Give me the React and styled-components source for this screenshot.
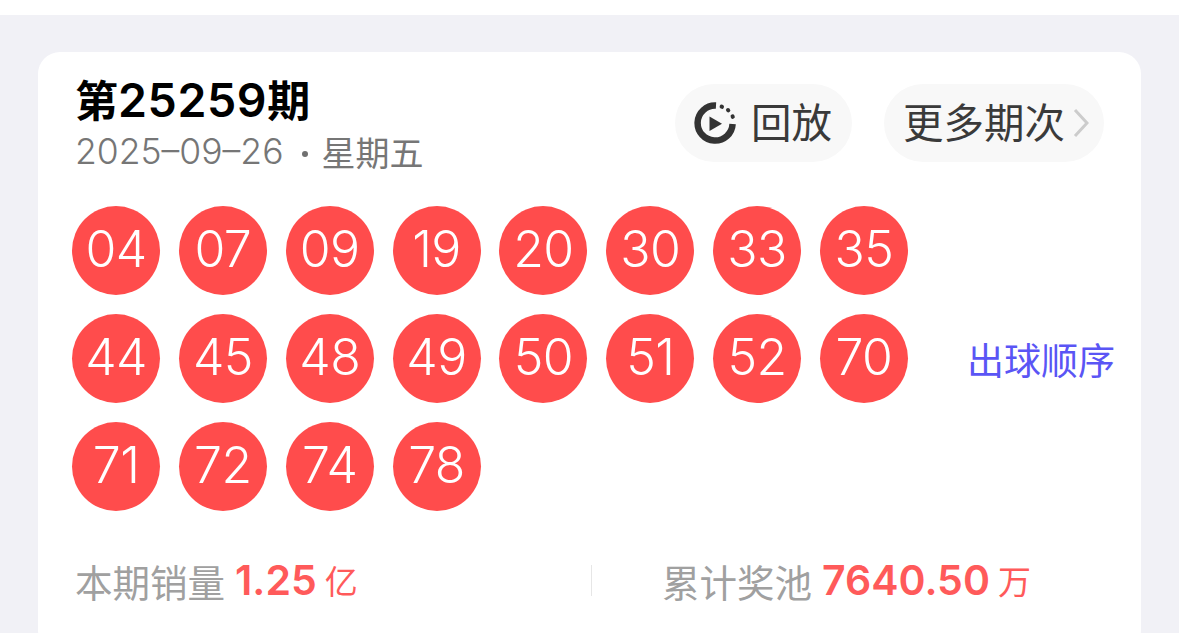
import React from "react"
import styled, { createGlobalStyle } from "styled-components"

const balls = [
    "04", "07", "09", "19", "20", "30", "33", "35",
    "44", "45", "48", "49", "50", "51", "52", "70",
    "71", "72", "74", "78",
]

const CJK = `"Noto Sans CJK SC", sans-serif`
const LATIN = `Inter, "Noto Sans CJK SC", sans-serif`

const Replay = () => (
    <svg width="42" height="42" viewBox="0 0 42 42">
        <path d="M22 3.6 A17.5 17.5 0 1 0 38.6 22" fill="none" stroke="#333" strokeWidth="6.5" />
        <path d="M27.6 4.6l.4.2M34 8l.3.3M38.6 14.4l.2.4" fill="none" stroke="#333" strokeWidth="4" strokeLinecap="round" />
        <path d="M15.5 14.5v14.5l12.5-7.3z" fill="#333" />
    </svg>
)

const App = () => {
    return (
        <Page>
            <GlobalStyle />
            <Card>
                <Header>
                    <div>
                        <Title>第<Digits>25259</Digits>期</Title>
                        <DateLine>
                            <DateNum>2025–09–26</DateNum>
                            <Dot />
                            星期五
                        </DateLine>
                    </div>
                    <Actions>
                        <Pill $wide={false}>
                            <Replay />
                            <PillLabel>回放</PillLabel>
                        </Pill>
                        <Pill $wide>
                            <PillLabel>更多期次</PillLabel>
                            <svg width="16" height="30" viewBox="0 0 16 30">
                                <path d="M2 2l12 13L2 28" fill="none" stroke="#ccc" strokeWidth="3" />
                            </svg>
                        </Pill>
                    </Actions>
                </Header>

                <Draw>
                    <BallGrid>
                        {balls.map((n) => <Ball key={n}>{n}</Ball>)}
                    </BallGrid>
                    <OrderLink>出球顺序</OrderLink>
                </Draw>

                <Footer>
                    <Stat>
                        本期销量
                        <Value>1.25</Value>
                        <Unit>亿</Unit>
                    </Stat>
                    <Divider />
                    <Stat $right>
                        累计奖池
                        <Value>7640.50</Value>
                        <Unit>万</Unit>
                    </Stat>
                </Footer>
            </Card>
        </Page>
    )
}

export default App

// Style
const GlobalStyle = createGlobalStyle`
    html, body {
        margin: 0;
        padding: 0;
        background: #fff;
        overflow: hidden;
    }
`

const Page = styled.div`
    height: 618px;
    margin-top: 15px;
    padding: 37px 38px 0;
    box-sizing: border-box;
    background: #f1f1f6;
    overflow: hidden;
`

const Card = styled.div`
    height: 600px;
    padding: 21px 37px 0 34px;
    box-sizing: border-box;
    background: #fff;
    border-radius: 22px;
`

const Header = styled.div`
    display: flex;
    justify-content: space-between;
    padding-left: 3px;
    height: 133px;
`

const Title = styled.div`
    font-family: ${CJK};
    font-size: 43px;
    font-weight: 700;
    line-height: 50px;
    color: #000;
`

const Digits = styled.span`
    font-family: Inter, sans-serif;
    font-size: 46.5px;
    font-weight: 600;
    letter-spacing: 0.6px;
`

const DateLine = styled.div`
    display: flex;
    align-items: center;
    margin-top: 2px;
    font-family: ${CJK};
    font-size: 34px;
    line-height: 50px;
    color: #767676;
`

const DateNum = styled.span`
    font-family: Inter, sans-serif;
    font-size: 35.5px;
    font-weight: 300;
`

const Dot = styled.span`
    width: 6px;
    height: 6px;
    margin: 4px 14px 0 18px;
    border-radius: 50%;
    background: #707070;
`

const Actions = styled.div`
    display: flex;
    gap: 32px;
    margin-top: 11px;
`

const Pill = styled.div`
    display: flex;
    align-items: center;
    gap: ${(props) => (props.$wide ? "8px" : "15px")};
    height: 78px;
    padding: ${(props) => (props.$wide ? "0 15px 0 19px" : "0 20px 0 19px")};
    box-sizing: border-box;
    border-radius: 39px;
    background: #f8f8f8;
    font-family: ${CJK};
    font-size: 40.5px;
    color: #3a3a3a;
`

const PillLabel = styled.span`
    line-height: 1;
    margin-bottom: 3px;
`

const Draw = styled.div`
    display: flex;
    align-items: center;
    justify-content: space-between;
    margin-right: -11px;
`

const BallGrid = styled.div`
    display: grid;
    grid-template-columns: repeat(8, 88px);
    grid-auto-rows: 89px;
    column-gap: 18.85px;
    row-gap: 19px;
`

const Ball = styled.div`
    display: flex;
    align-items: center;
    justify-content: center;
    padding-bottom: 4px;
    box-sizing: border-box;
    border-radius: 50%;
    background: #ff4c4c;
    font-family: Inter, sans-serif;
    font-size: 50px;
    font-weight: 300;
    letter-spacing: -0.6px;
    color: #fff;
`

const OrderLink = styled.div`
    font-family: ${CJK};
    font-size: 37px;
    color: #5a55f5;
`

const Footer = styled.div`
    display: flex;
    align-items: center;
    margin-top: 44px;
    padding-left: 3px;
    height: 50px;
`

const Stat = styled.div`
    display: flex;
    align-items: center;
    width: ${(props) => (props.$right ? "auto" : "516px")};
    margin-left: ${(props) => (props.$right ? "70px" : "0")};
    font-family: ${CJK};
    font-size: 37.5px;
    color: #a0a0a0;
`

const Value = styled.span`
    margin: 0 8px 0 10px;
    font-family: ${LATIN};
    font-size: 41px;
    font-weight: 600;
    color: #ff5a5a;
`

const Unit = styled.span`
    font-size: 33px;
    color: #ff5a5a;
`

const Divider = styled.div`
    width: 1px;
    height: 31px;
    background: #e6e6e6;
`
